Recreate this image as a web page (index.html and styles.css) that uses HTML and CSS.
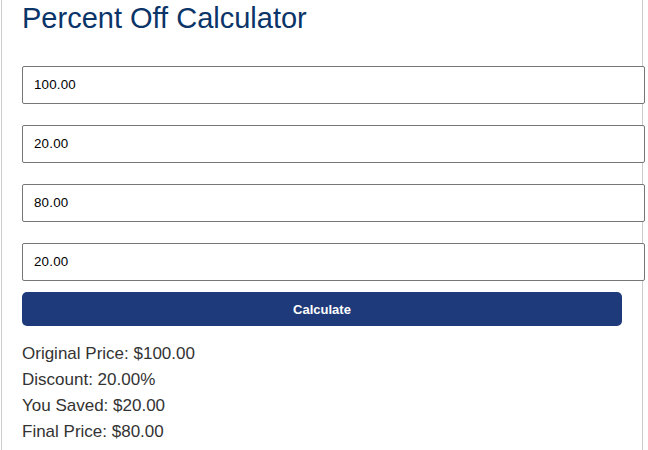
FILE: index.html
```html
<!DOCTYPE html>
<html lang="en">
<head>
  <meta charset="UTF-8" />
  <meta name="viewport" content="width=device-width, initial-scale=1.0"/>
  <title>Percent Off Calculator</title>
  <link rel="stylesheet" href="styles.css">
</head>
<body>
  <div class="calculator">
    <h1>Percent Off Calculator</h1>
    <input type="text" id="price" value="100.00">
    <input type="text" id="percent" value="20.00">
    <input type="text" id="final" value="80.00">
    <input type="text" id="saved" value="20.00">
    <button id="calcBtn">Calculate</button>
    <div class="results">
      <p>Original Price: $100.00</p>
      <p>Discount: 20.00%</p>
      <p>You Saved: $20.00</p>
      <p>Final Price: $80.00</p>
    </div>
  </div>
</body>
</html>
```

FILE: styles.css
```css
* {
  margin: 0;
  padding: 0;
}

body {
  font-family: "Liberation Sans", Arial, sans-serif;
  background-color: #fff;
}

.calculator {
  width: 600px;
  margin-left: 1px;
  padding: 2px 20px 20px;
  border: 1px solid #ccc;
  border-top: 0;
}

h1 {
  font-size: 29px;
  font-weight: normal;
  color: #0b3468;
  margin-bottom: 31px;
}

input[type="text"] {
  display: block;
  width: 100%;
  padding: 10px 10px 10px 11px;
  line-height: 16px;
  font-family: "Liberation Sans", Arial, sans-serif;
  font-size: 13.33px;
  letter-spacing: 0.2px;
  color: #000;
  border: 1px solid #767676;
  border-radius: 2px;
  margin-bottom: 21px;
}

input[type="text"]:last-of-type {
  margin-bottom: 11px;
}

button {
  display: block;
  width: 100%;
  height: 34px;
  background-color: #1f3a7a;
  color: #fff;
  border: none;
  border-radius: 5px;
  font-family: "Liberation Sans", Arial, sans-serif;
  font-size: 13px;
  font-weight: bold;
  cursor: pointer;
}

.results {
  margin-top: 15px;
  color: #333;
  font-size: 17px;
  line-height: 26px;
}
```
